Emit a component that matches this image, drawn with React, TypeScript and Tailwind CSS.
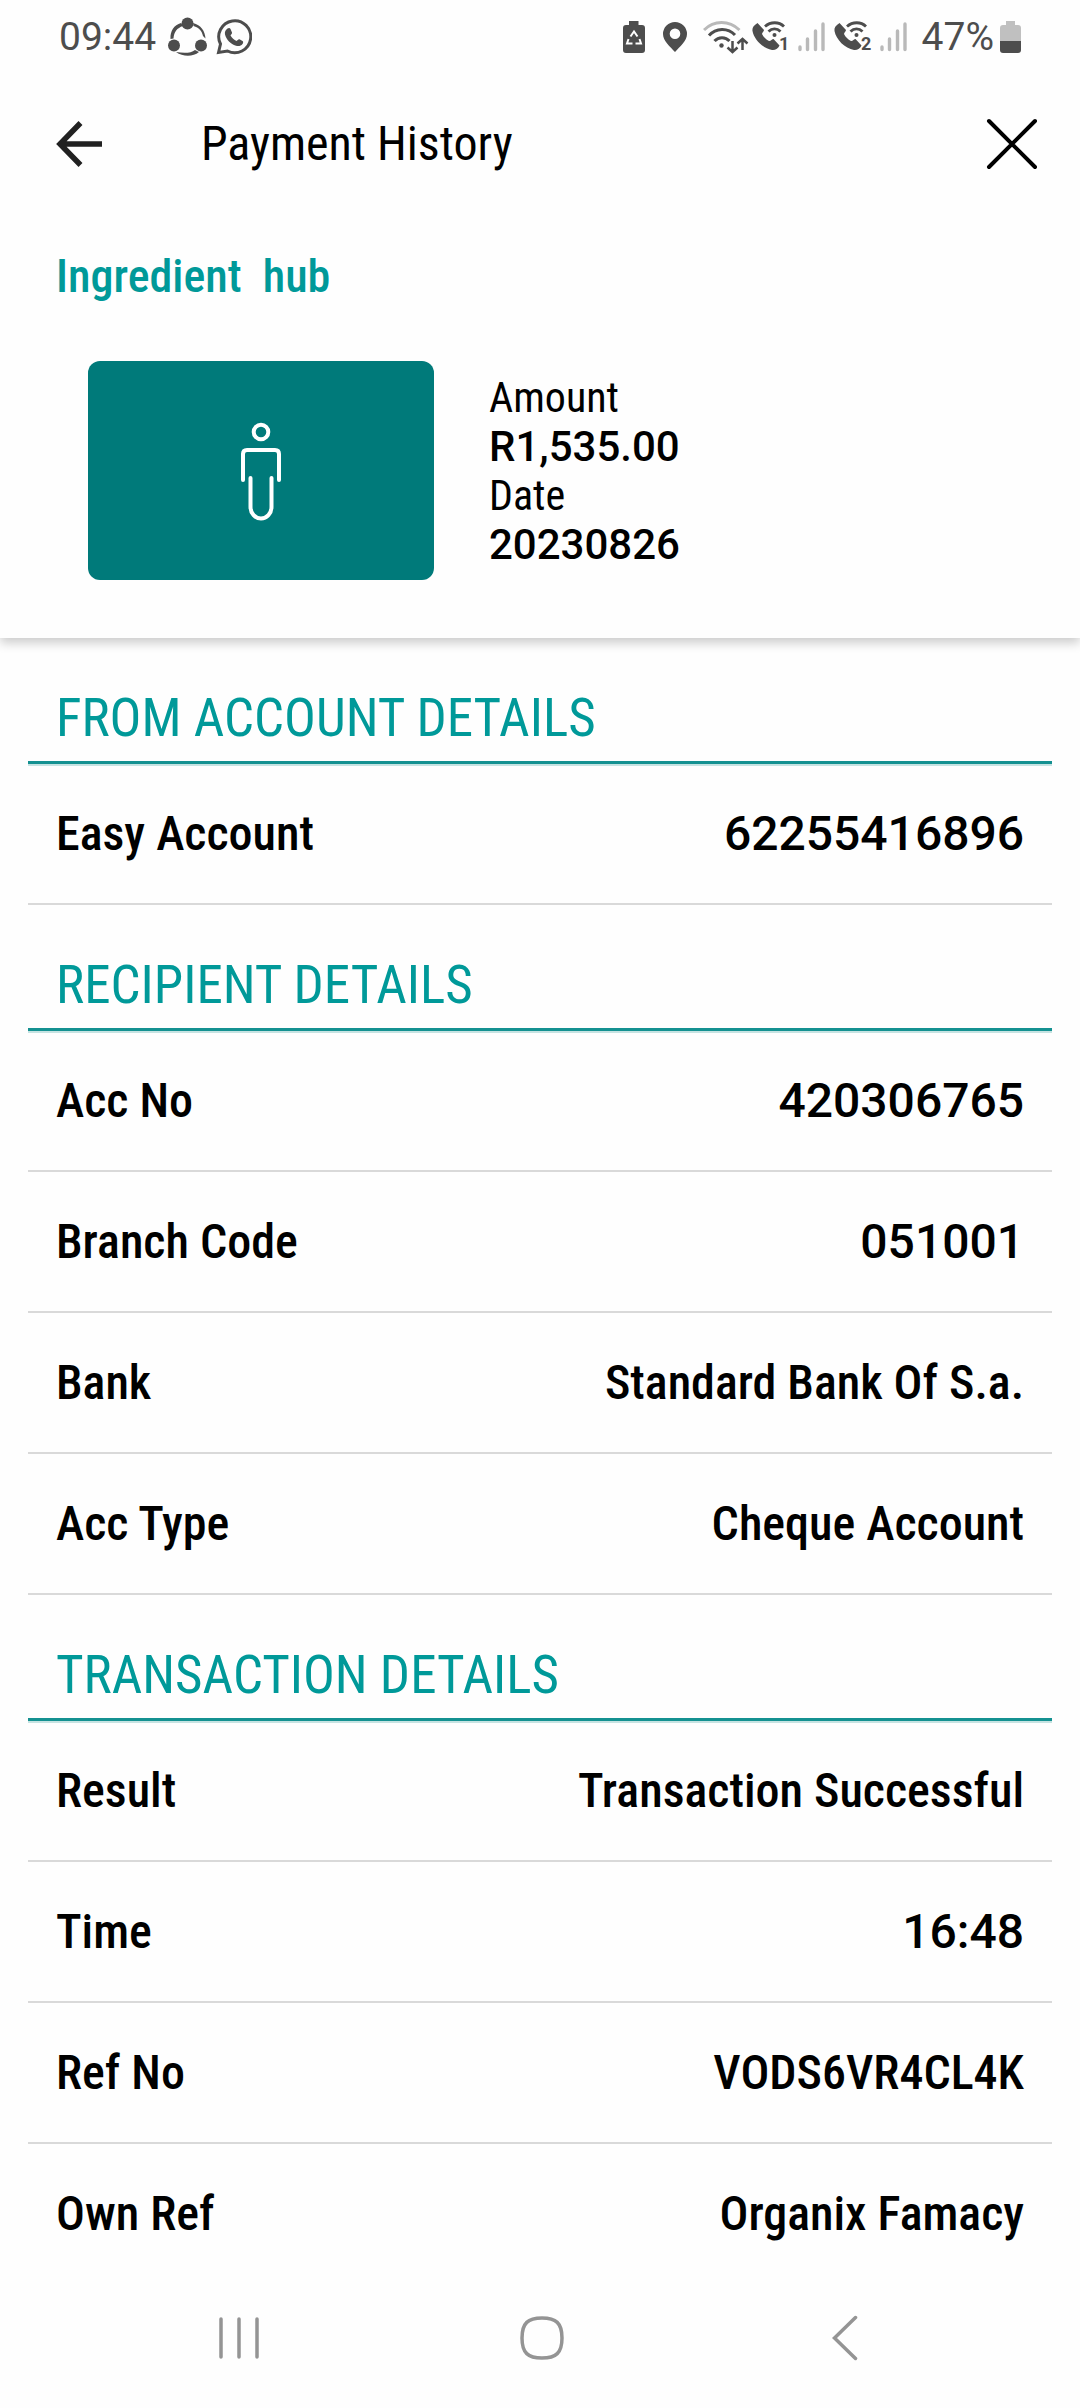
import React from 'react';

type Detail = { label: string; value: string; numeric?: boolean };

const sections: { title: string; rows: Detail[] }[] = [
  {
    title: 'FROM ACCOUNT DETAILS',
    rows: [{ label: 'Easy Account', value: '62255416896', numeric: true }],
  },
  {
    title: 'RECIPIENT DETAILS',
    rows: [
      { label: 'Acc No', value: '420306765', numeric: true },
      { label: 'Branch Code', value: '051001', numeric: true },
      { label: 'Bank', value: 'Standard Bank Of S.a.' },
      { label: 'Acc Type', value: 'Cheque Account' },
    ],
  },
  {
    title: 'TRANSACTION DETAILS',
    rows: [
      { label: 'Result', value: 'Transaction Successful' },
      { label: 'Time', value: '16:48', numeric: true },
      { label: 'Ref No', value: 'VODS6VR4CL4K' },
      { label: 'Own Ref', value: 'Organix Famacy' },
    ],
  },
];

function ShareIcon() {
  return (
    <svg className="w-10 h-10" viewBox="0 0 40 40" fill="#4d4d4d">
      <path d="M2.500 22C2 14 6 8 13 6l2 3C9 11 6 15 5.500 21.500z" />
      <path d="M25 6c8 2 12 8 12.500 15.500L35 19c-1-5-4-8.500-9.500-10z" />
      <path d="M8 35c7 5 17 5 23 0l-4-2c-4 3-10 3.500-19 2z" />
      <circle cx="19.500" cy="6.500" r="6" />
      <circle cx="6" cy="28.500" r="6" />
      <circle cx="33" cy="28.500" r="6" />
    </svg>
  );
}

function WhatsappIcon() {
  return (
    <svg className="w-9 h-9" viewBox="0 0 36 36">
      <path
        d="M2.500 33.500l2-8.500A16 16 0 1 1 11.500 32z"
        fill="none"
        stroke="#4d4d4d"
        strokeWidth="3"
      />
      <path
        d="M11.500 9.500c1.500-1 2.500-.5 3 .5l1.500 3.500c.4 1-1 2-1.500 3 1.500 2.500 3.500 4.300 6 5.500 1-.7 2-2.200 3-1.700l3 1.700c1 .5.8 2 0 3-1.500 2-4 2.500-6.500 1.700C14.500 25 10.500 21 9 15.500c-.5-2.500.5-4.700 2.500-6z"
        fill="#4d4d4d"
      />
    </svg>
  );
}

function BatterySaverIcon() {
  return (
    <svg className="w-[22px] h-8" viewBox="0 0 22 32">
      <path d="M6 0h9.500v4H19a3 3 0 0 1 3 3v22a3 3 0 0 1-3 3H3a3 3 0 0 1-3-3V7a3 3 0 0 1 3-3h3z" fill="#4d4d4d" />
      <g fill="none" stroke="#fff" strokeWidth="2">
        <path d="M7.500 15.500l3.500-5 3.500 5" />
        <path d="M5.500 18L4 22.500h5.500" />
        <path d="M16.500 18l1.500 4.500h-5.500" />
      </g>
    </svg>
  );
}

function PinIcon() {
  return (
    <svg className="w-6 h-[30px]" viewBox="0 0 24 30" fill="#4d4d4d">
      <path
        fillRule="evenodd"
        d="M12 0a12 12 0 0 1 12 12c0 7-7 12.500-12 18C7 24.500 0 19 0 12A12 12 0 0 1 12 0zm0 6.500a5.300 5.300 0 1 0 0 10.600 5.300 5.300 0 0 0 0-10.600z"
      />
    </svg>
  );
}

function WifiIcon() {
  return (
    <svg className="w-[46px] h-[34px]" viewBox="0 0 46 34" fill="none" strokeWidth="3">
      <path d="M1 10C11 0 26 0 36.500 10" stroke="#b9b9b9" />
      <path d="M6 15.500C13 7.500 25 7.500 32 15" stroke="#4d4d4d" />
      <path d="M11.500 21c4-4.500 11-4.500 15 0" stroke="#4d4d4d" />
      <circle cx="18.500" cy="25.500" r="2.200" fill="#4d4d4d" />
      <path d="M29.500 21v10.500M24.500 27.500l5 4.500 5-4.500" stroke="#4d4d4d" strokeWidth="2.500" />
      <path d="M39.500 30V19.500M34.500 23.500l5-4.500 5 4.500" stroke="#4d4d4d" strokeWidth="2.500" />
    </svg>
  );
}

function WifiCallIcon({ sim }: { sim: string }) {
  return (
    <svg className="w-[38px] h-8" viewBox="0 0 38 32">
      <path
        d="M5.500 2c-4 2.500-5.500 5-5 8C2 18.500 11 27.500 20 29c3 .5 6.500-1.500 7.500-4.500L21.500 18c-1.500 0-3 2.500-4.500 2-3-1.500-5.500-4-7-7 0-1.500 2-2.500 2-4z"
        fill="#4d4d4d"
      />
      <path d="M13 5.500c5.500-5 14-5 19 0M16.500 10.500c3.500-3.500 8.500-3.500 12 0" fill="none" stroke="#4d4d4d" strokeWidth="2.800" />
      <circle cx="22.500" cy="14" r="2" fill="#4d4d4d" />
      <text x="27" y="29" fontSize="18" fontWeight="700" fontFamily="Roboto, sans-serif" fill="#4d4d4d">
        {sim}
      </text>
    </svg>
  );
}

function SignalIcon() {
  return (
    <svg className="w-7 h-[30px]" viewBox="0 0 28 30" stroke="#b9b9b9" strokeWidth="3.400" strokeLinecap="round">
      <path d="M2 25v2.500M9.500 17v10.500M17.500 9v18.500M25 2v25.500" />
    </svg>
  );
}

function StatusBar() {
  return (
    <div className="flex h-[74px] items-center justify-between px-[59px] font-[Roboto,sans-serif] text-[39px] leading-[48px] text-[#4d4d4d]">
      <div className="flex items-center gap-2">
        <span className="mr-1">09:44</span>
        <ShareIcon />
        <WhatsappIcon />
      </div>
      <div className="flex items-center">
        <BatterySaverIcon />
        <span className="ml-[18px] mr-4"><PinIcon /></span>
        <WifiIcon />
        <span className="ml-[3px] mr-2"><WifiCallIcon sim="1" /></span>
        <SignalIcon />
        <span className="mx-2"><WifiCallIcon sim="2" /></span>
        <SignalIcon />
        <span className="ml-3.5 mr-1.5">47%</span>
        <svg className="w-[21px] h-8" viewBox="0 0 21 32">
          <path d="M6 0h9v4h3a3 3 0 0 1 3 3v13H0V7a3 3 0 0 1 3-3h3z" fill="#c0c0c0" />
          <path d="M0 20h21v9a3 3 0 0 1-3 3H3a3 3 0 0 1-3-3z" fill="#4d4d4d" />
        </svg>
      </div>
    </div>
  );
}

function Header() {
  return (
    <header className="flex h-[140px] items-center pl-14 pr-10">
      <button aria-label="Back">
        <svg className="w-[46px] h-12" viewBox="0 0 46 48" fill="none" stroke="#212121" strokeWidth="5.500">
          <path d="M24.500 3L4 24l20.500 21M4 24h42" />
        </svg>
      </button>
      <h1 className="ml-[99px] flex-1 text-[48px] leading-[60px]">Payment History</h1>
      <button aria-label="Close">
        <svg className="w-14 h-14" viewBox="0 0 56 56" stroke="#000" strokeWidth="4" strokeLinecap="round">
          <path d="M5 5l46 46M51 5L5 51" />
        </svg>
      </button>
    </header>
  );
}

function Summary() {
  return (
    // the clip keeps the shadow on the bottom edge only
    <section className="h-[424px] px-14 pt-8 shadow-[0_5px_10px_rgba(0,0,0,0.2)] [clip-path:inset(0_0_-20px_0)]">
      <h2 className="whitespace-pre text-[46px] font-medium leading-[60px] text-[#009999]">Ingredient  hub</h2>
      <div className="mt-[55px] ml-8 flex">
        <div className="flex h-[219px] w-[346px] items-center justify-center rounded-xl bg-[#007a7a]">
          <svg className="w-11 h-[100px]" viewBox="0 0 44 100" fill="none" stroke="#fff" strokeWidth="4" strokeLinecap="round">
            <circle cx="22" cy="11" r="7.300" />
            <path d="M4 59V33q0-4 4-4h28q4 0 4 4v26" />
            <path d="M11.500 57v29a10.500 11.500 0 0 0 21 0V57" />
          </svg>
        </div>
        <dl className="ml-[55px] pt-3 text-[42px] leading-[49px]">
          <dt>Amount</dt>
          <dd className="font-[Roboto,sans-serif] font-medium">R1,535.00</dd>
          <dt>Date</dt>
          <dd className="font-[Roboto,sans-serif] font-medium">20230826</dd>
        </dl>
      </div>
    </section>
  );
}

function NavBar() {
  return (
    <nav className="grid h-[140px] grid-cols-3 place-items-center pl-[88px] pr-[84px]">
      <button aria-label="Recent apps">
        <svg className="w-[42px] h-11" viewBox="0 0 42 44" stroke="#949494" strokeWidth="3.500" strokeLinecap="round">
          <path d="M3 3v38M21 3v38M39 3v38" />
        </svg>
      </button>
      <button aria-label="Home">
        <svg className="w-11 h-11" viewBox="0 0 44 44" fill="none" stroke="#949494" strokeWidth="3.500">
          <path d="M22 2c14 0 20 5 20 20s-6 20-20 20S2 37 2 22 8 2 22 2z" />
        </svg>
      </button>
      <button aria-label="Back to previous app">
        <svg className="w-[26px] h-[46px]" viewBox="0 0 26 46" fill="none" stroke="#949494" strokeWidth="3.500" strokeLinecap="round">
          <path d="M23.500 2.500L2.500 23l21 20.500" />
        </svg>
      </button>
    </nav>
  );
}

export default function App() {
  return (
    <div className="min-h-screen w-full bg-[#fefefe] font-['Roboto_Condensed','Liberation_Sans_Narrow',Roboto,sans-serif] text-black">
      <StatusBar />
      <Header />
      <Summary />

      <main className="px-7">
        {sections.map((section, index) => {
          const isLast = index === sections.length - 1;

          return (
            <section key={section.title}>
              <h2 className="h-[126px] border-b-3 border-[#149191] px-7 pt-[50px] text-[53px] leading-[60px] text-[#009999] shadow-[0_2px_0_#c6e3e2]">
                {section.title}
              </h2>
              <dl className={isLast ? '[&>div:last-child]:border-b-0 [&>div:last-child]:pb-6' : ''}>
                {section.rows.map((row) => (
                  <div
                    key={row.label}
                    className="flex justify-between border-b-2 border-[#d9d9d9] px-7 pt-10 pb-[39px] text-[48px] font-medium leading-[60px]"
                  >
                    <dt>{row.label}</dt>
                    <dd className={row.numeric ? 'font-[Roboto,sans-serif]' : ''}>{row.value}</dd>
                  </div>
                ))}
              </dl>
            </section>
          );
        })}
      </main>

      <NavBar />
    </div>
  );
}
